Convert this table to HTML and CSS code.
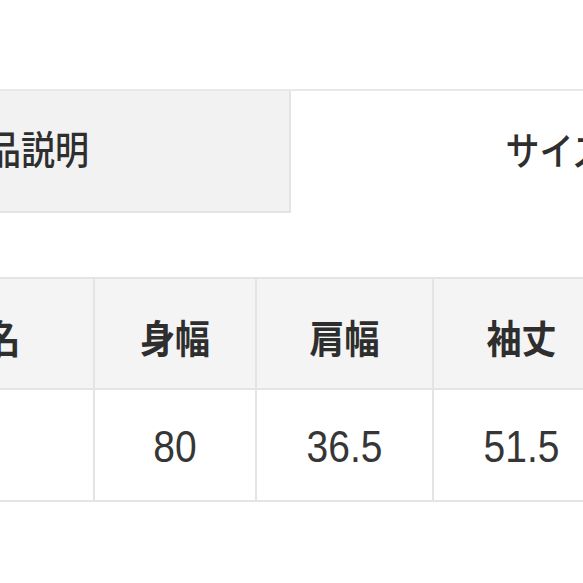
FILE: index.html
```html
<!DOCTYPE html>
<html lang="ja">
<head>
<meta charset="utf-8">
<link rel="stylesheet" href="styles.css">
</head>
<body>
<div class="page">
  <div class="tabs">
    <div class="tab tab-active"><span class="label">商品説明</span></div>
    <div class="tab"><span class="label">サイズ</span></div>
  </div>
  <table class="size-table">
    <colgroup>
      <col class="c-name">
      <col class="c-1">
      <col class="c-2">
      <col class="c-3">
      <col class="c-4">
    </colgroup>
    <tr class="head">
      <th><span class="label">サイズ名</span></th>
      <th><span class="label">身幅</span></th>
      <th><span class="label">肩幅</span></th>
      <th><span class="label">袖丈</span></th>
      <th><span class="label">着丈</span></th>
    </tr>
    <tr class="body">
      <td></td>
      <td><span class="label">80</span></td>
      <td><span class="label">36.5</span></td>
      <td><span class="label">51.5</span></td>
      <td><span class="label">70</span></td>
    </tr>
  </table>
</div>
</body>
</html>
```

FILE: styles.css
```css
html, body {
  margin: 0;
  padding: 0;
  background: #ffffff;
  overflow: hidden;
}

.page {
  width: 583px;
  height: 583px;
  overflow: hidden;
  padding-top: 89px;
  box-sizing: border-box;
  font-family: "Noto Sans CJK JP", "Noto Sans", sans-serif;
  color: #333333;
}

.label {
  display: inline-block;
  transform: scaleY(1.12);
}

.tabs {
  display: flex;
  margin-left: -247px;
  width: 1100px;
  border-top: 2px solid #e8e8e8;
}

.tab {
  flex: 0 0 auto;
  width: 530px;
  height: 122px;
  display: flex;
  align-items: center;
  justify-content: center;
  font-size: 34px;
  font-weight: 500;
  line-height: 1;
  color: #2e2e2e;
  padding-bottom: 6px;
  box-sizing: border-box;
}

.tab-active {
  width: 538px;
  background: #f2f2f2;
  border-right: 2px solid #e4e4e4;
  border-bottom: 2px solid #e4e4e4;
}

.size-table {
  width: 979px;
  margin-top: 64px;
  margin-left: -193px;
  border-collapse: collapse;
  table-layout: fixed;
}

.c-name { width: 286px; }
.c-1 { width: 162px; }
.c-2 { width: 177px; }
.c-3 { width: 177px; }
.c-4 { width: 177px; }

.size-table th,
.size-table td {
  border: 2px solid #e4e4e4;
  padding: 0;
  text-align: center;
  vertical-align: middle;
  line-height: 1;
}

.size-table th {
  height: 105px;
  background: #f4f4f4;
  font-size: 35px;
  font-weight: 700;
  color: #2e2e2e;
  padding-top: 4px;
}

.size-table td {
  height: 107px;
  background: #ffffff;
  font-family: "Liberation Sans", Arial, sans-serif;
  font-size: 39px;
  font-weight: 400;
  color: #363636;
  padding-top: 3px;
}
```
